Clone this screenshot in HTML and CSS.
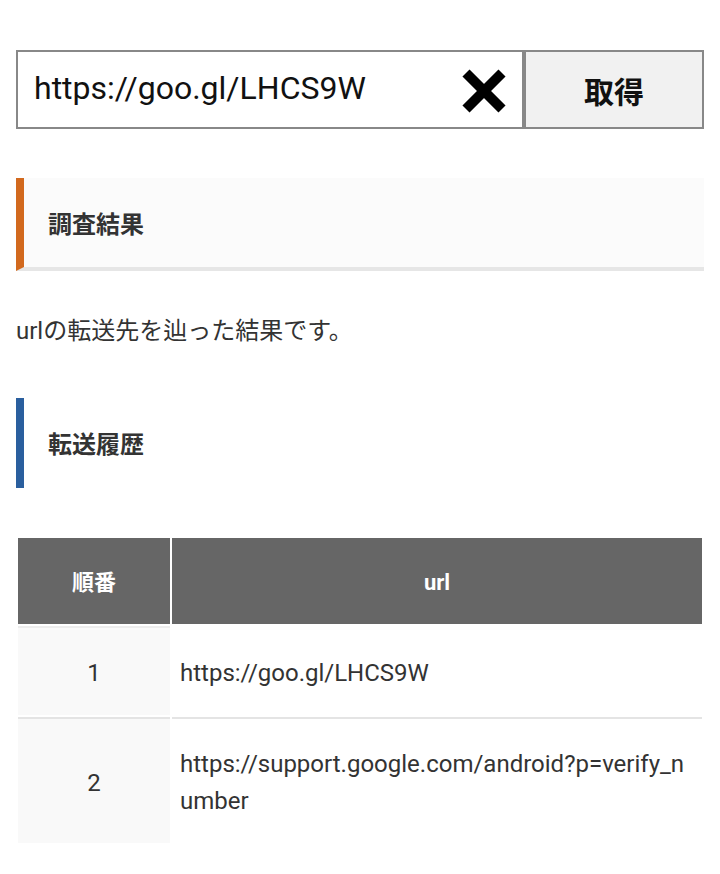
FILE: index.html
```html
<!DOCTYPE html>
<html lang="ja">
<head>
<meta charset="utf-8">
<title>転送先調査</title>
<link rel="stylesheet" href="styles.css">
</head>
<body>
<form class="search">
  <div class="field">
    <span class="field-text">https://goo.gl/LHCS9W</span>
    <svg class="clear" width="46" height="44" viewBox="0 0 46 44" aria-hidden="true">
      <line x1="5" y1="4" x2="41" y2="40" stroke="#000" stroke-width="10"/>
      <line x1="41" y1="4" x2="5" y2="40" stroke="#000" stroke-width="10"/>
    </svg>
  </div>
  <button type="button" class="submit">取得</button>
</form>

<h2 class="heading heading-orange">調査結果</h2>
<p class="lead">urlの転送先を辿った結果です。</p>

<h3 class="heading heading-blue">転送履歴</h3>

<table class="history">
  <thead>
    <tr><th class="col-no">順番</th><th>url</th></tr>
  </thead>
  <tbody>
    <tr class="first"><td class="col-no">1</td><td class="col-url">https://goo.gl/LHCS9W</td></tr>
    <tr><td class="col-no">2</td><td class="col-url">https://support.google.com/android?p=verify_number</td></tr>
  </tbody>
</table>
</body>
</html>
```

FILE: styles.css
```css
html, body {
  margin: 0;
  padding: 0;
  background: #fff;
}
body {
  padding: 50px 16px 0;
  font-family: Roboto, "Noto Sans CJK JP", sans-serif;
  color: #333;
  font-size: 24px;
}

.search {
  display: flex;
  height: 79px;
  margin: 0;
}
.field {
  flex: 1;
  display: flex;
  align-items: center;
  border: 2px solid #888;
  padding: 0 16px 0 16px;
  background: #fff;
}
.field-text {
  flex: 1;
  font-size: 32px;
  color: #111;
  padding-bottom: 4px;
}
.clear {
  display: block;
  margin-top: 3px;
  margin-right: -1px;
}
.submit {
  width: 180px;
  border: 2px solid #888;
  background: #f1f1f1;
  font-family: Roboto, "Noto Sans CJK JP", sans-serif;
  font-weight: 700;
  font-size: 30px;
  color: #111;
  padding: 0;
  margin: 0;
}

.heading {
  margin: 0;
  font-size: 24px;
  font-weight: 700;
  line-height: 38px;
  color: #333;
  border-left: 8px solid;
  padding: 28px 24px 23px;
}
.heading-orange {
  margin-top: 49px;
  border-left-color: #d2691e;
  background: #fbfbfb;
  border-bottom: 4px solid #e6e6e6;
}
.heading-blue {
  border-left-color: #2a5f9e;
  padding-top: 28px;
  padding-bottom: 24px;
}

.lead {
  margin: 41px 0 48px;
  line-height: 38px;
}

.history {
  margin-top: 48px;
  width: 100%;
  border-collapse: separate;
  border-spacing: 2px;
}
.history th {
  background: #666;
  color: #fff;
  font-weight: 700;
  font-size: 22px;
  line-height: 37px;
  padding: 26px 8px 23px;
  text-align: center;
}
.history th.col-no {
  width: 136px;
}
.history td {
  border-top: 2px solid #e4e4e4;
  padding: 27px 8px 23px;
  line-height: 37px;
  vertical-align: middle;
}
.history tr.first td.col-url {
  border-top-color: #fff;
}
.history td.col-no {
  background: #f9f9f9;
  text-align: center;
}
.history tr.first td.col-no {
  border-top-color: #ececec;
}
.history td.col-url {
  word-break: break-all;
}
```
